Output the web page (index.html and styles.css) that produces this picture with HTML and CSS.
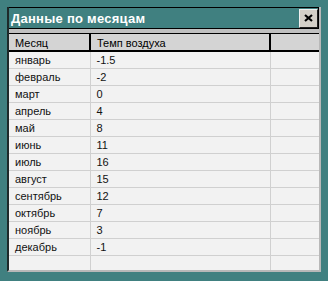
FILE: index.html
```html
<!DOCTYPE html>
<html lang="ru">
<head>
    <meta charset="UTF-8">
    <title>Данные по месяцам</title>
    <link rel="stylesheet" href="styles.css">
</head>
<body>
    <div class="window">
        <div class="titlebar">
            <span class="title">Данные по месяцам</span>
            <button class="close" title="Закрыть">
                <svg width="9" height="8" viewBox="0 0 9 8">
                    <path d="M1 1 L8 7 M8 1 L1 7" stroke="#000" stroke-width="2.2" fill="none"/>
                </svg>
            </button>
        </div>
        <div class="grid">
            <table>
                <thead>
                    <tr>
                        <th class="col-month">Месяц</th>
                        <th class="col-temp">Темп воздуха</th>
                        <th class="col-rest"></th>
                    </tr>
                </thead>
                <tbody>
                    <tr><td>январь</td><td>-1.5</td><td></td></tr>
                    <tr><td>февраль</td><td>-2</td><td></td></tr>
                    <tr><td>март</td><td>0</td><td></td></tr>
                    <tr><td>апрель</td><td>4</td><td></td></tr>
                    <tr><td>май</td><td>8</td><td></td></tr>
                    <tr><td>июнь</td><td>11</td><td></td></tr>
                    <tr><td>июль</td><td>16</td><td></td></tr>
                    <tr><td>август</td><td>15</td><td></td></tr>
                    <tr><td>сентябрь</td><td>12</td><td></td></tr>
                    <tr><td>октябрь</td><td>7</td><td></td></tr>
                    <tr><td>ноябрь</td><td>3</td><td></td></tr>
                    <tr><td>декабрь</td><td>-1</td><td></td></tr>
                    <tr class="empty"><td></td><td></td><td></td></tr>
                </tbody>
            </table>
        </div>
    </div>
</body>
</html>
```

FILE: styles.css
```css
body {
    margin: 0;
    background-color: #408080;
    font-family: "Liberation Sans", Arial, sans-serif;
    font-size: 11px;
}
.window {
    margin: 7px 0 0 7px;
    width: 310px;
    height: 263px;
    display: flex;
    flex-direction: column;
    background-color: #c0c0c0;
    border-left: 2px solid #1e2a2a;
    border-right: 2px solid #b8b8b8;
    border-bottom: 2px solid #b8b8b8;
}
.titlebar {
    display: flex;
    align-items: center;
    justify-content: space-between;
    height: 20px;
    flex-shrink: 0;
    background-color: #408080;
    border: 1px solid #000;
    border-left: none;
}
.title {
    color: #fff;
    font-weight: bold;
    font-size: 13px;
    letter-spacing: 0.25px;
    padding-left: 2px;
    padding-top: 1px;
}
.close {
    width: 19px;
    height: 19px;
    margin: 0;
    padding: 0;
    display: flex;
    align-items: center;
    justify-content: center;
    background-color: #d4d0c8;
    border: 1px solid #f0f0f0;
    border-right-color: #202020;
    border-bottom-color: #202020;
}
.grid {
    flex: 1;
    margin-top: 4px;
    background-color: #f2f2f2;
    overflow: hidden;
}
table {
    width: 100%;
    border-collapse: collapse;
    table-layout: fixed;
}
th {
    height: 14px;
    padding: 2px 0 0 6px;
    line-height: 13px;
    font-weight: normal;
    text-align: left;
    color: #000;
    background-color: #d4d4d4;
    border-top: 1px solid #000;
    border-bottom: 2px solid #000;
    border-right: 2px solid #000;
}
th.col-rest {
    border-right: none;
}
.col-month {
    width: 74px;
}
.col-temp {
    width: 172px;
}
td {
    height: 15px;
    padding: 1px 0 0 6px;
    line-height: 15px;
    color: #111;
    border-bottom: 1px solid #d0d0d0;
    border-right: 1px solid #d0d0d0;
    white-space: nowrap;
}
td:last-child {
    border-right: none;
}
.empty td {
    height: 14px;
    padding: 0;
    border-bottom: none;
}
```
